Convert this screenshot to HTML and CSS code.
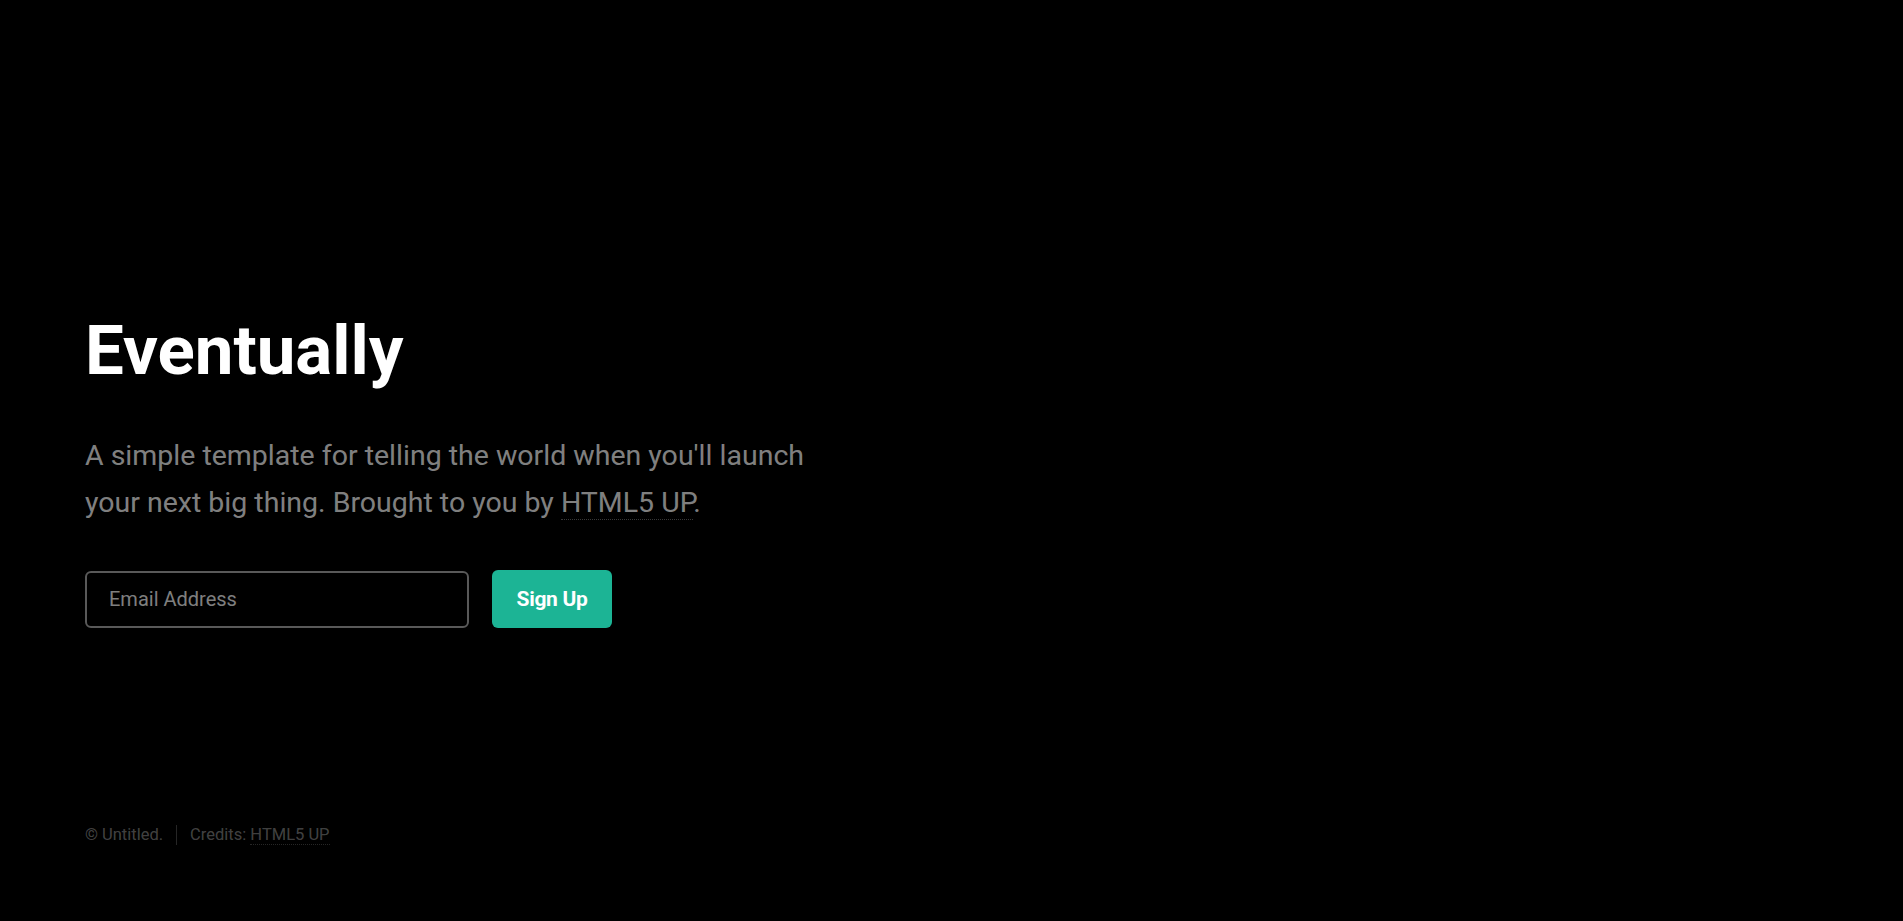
FILE: index.html
```html
<!DOCTYPE html>
<html lang="en">
<head>
<meta charset="utf-8">
<title>Eventually</title>
<link rel="stylesheet" href="styles.css">
</head>
<body>
<div class="page">
  <main class="main">
    <header class="header">
      <h1 class="title">Eventually</h1>
      <p class="lead">A simple template for telling the world when you'll launch your next big thing. Brought to you by <a class="link" href="#">HTML5 UP</a>.</p>
    </header>
    <form class="signup">
      <input class="email" type="email" placeholder="Email Address">
      <button class="submit" type="button">Sign Up</button>
    </form>
  </main>
  <footer class="footer">
    <span class="copy">© Untitled.</span>
    <span class="sep"></span>
    <span class="credits">Credits: <a class="flink" href="#">HTML5 UP</a></span>
  </footer>
</div>
</body>
</html>
```
FILE: styles.css
```css
html, body {
  margin: 0;
  padding: 0;
  background: #000;
}
body {
  font-family: Roboto, "Liberation Sans", sans-serif;
  color: rgba(255, 255, 255, 0.5);
}
.page {
  display: flex;
  flex-direction: column;
  min-height: 100vh;
  box-sizing: border-box;
  padding: 316px 0 0 85px;
}
.main {
  flex: 1;
}
.title {
  margin: 0 0 47px 0;
  font-size: 69px;
  line-height: 69px;
  font-weight: 700;
  color: #fff;
  letter-spacing: 0;
}
.lead {
  margin: 0 0 44px 0;
  font-size: 28.5px;
  line-height: 47px;
  font-weight: 400;
  letter-spacing: 0;
  max-width: 740px;
  color: rgba(255, 255, 255, 0.52);
}
.link {
  color: inherit;
  text-decoration: none;
  border-bottom: 1px dotted rgba(255, 255, 255, 0.22);
}
.signup {
  display: flex;
  align-items: center;
  gap: 23px;
  margin: 0;
}
.email {
  box-sizing: border-box;
  width: 384px;
  height: 57px;
  margin: 0;
  padding: 0 22px;
  background: transparent;
  border: 2px solid rgba(255, 255, 255, 0.35);
  border-radius: 6px;
  font-family: Roboto, "Liberation Sans", sans-serif;
  font-size: 20px;
  font-weight: 400;
  color: #fff;
  outline: none;
}
.email::placeholder {
  color: rgba(255, 255, 255, 0.5);
}
.submit {
  box-sizing: border-box;
  width: 120px;
  height: 58px;
  margin: 0;
  padding: 0;
  background: #1cb495;
  border: 0;
  border-radius: 6px;
  font-family: Roboto, "Liberation Sans", sans-serif;
  font-size: 21px;
  font-weight: 700;
  letter-spacing: -0.015em;
  color: #fff;
}
.footer {
  display: flex;
  align-items: center;
  padding: 0 0 76px 0;
  font-size: 16.5px;
  line-height: 20px;
  color: rgba(255, 255, 255, 0.27);
}
.sep {
  width: 1px;
  height: 20px;
  background: rgba(255, 255, 255, 0.15);
  margin: 0 13px;
}
.flink {
  color: inherit;
  text-decoration: none;
  border-bottom: 1px dotted rgba(255, 255, 255, 0.15);
}
```
